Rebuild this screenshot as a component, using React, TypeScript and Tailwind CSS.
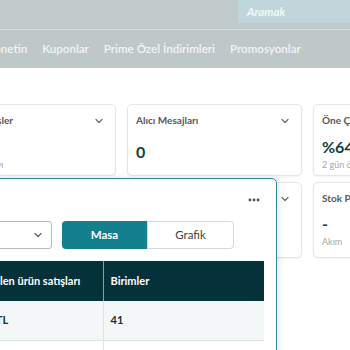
import { ChevronDown, MoreHorizontal } from 'lucide-react';

const font = { fontFamily: 'Lato, "Noto Sans", sans-serif' };

function StatCard({
  title,
  value,
  note,
  chevron,
  className = '',
}: {
  title: string;
  value?: string;
  note?: string;
  chevron?: boolean;
  className?: string;
}) {
  return (
    <div
      className={`relative flex w-[175px] shrink-0 flex-col rounded-[5px] border border-[#e2e6e6] bg-white px-[8px] pt-[8px] shadow-[0_1px_2px_rgba(0,0,0,0.05)] ${className}`}
    >
      <div className="flex items-center justify-between">
        <span className="whitespace-nowrap text-[10px] font-bold text-[#55595a]">{title}</span>
        {chevron && <ChevronDown size={12} strokeWidth={2.5} className="mr-[2px] text-[#6b7070]" />}
      </div>
      {value && <span className="mt-auto whitespace-nowrap text-[16px] font-bold leading-none text-[#123d44]">{value}</span>}
      {note && (
        <span className={`${value ? 'mt-[3px]' : 'mt-auto'} whitespace-nowrap text-[9px] text-[#a3a8a8]`}>{note}</span>
      )}
    </div>
  );
}

export default function App() {
  return (
    <div className="relative h-[350px] w-[350px] overflow-hidden bg-white" style={font}>
      {/* Top bar */}
      <div className="flex h-[29px] justify-end bg-[#c1cacb]">
        <div className="flex h-[23px] w-[112px] items-center bg-[#c1d6da] pl-[9px]">
          <span className="text-[11.5px] font-bold italic text-[#f4f8f8]">Aramak</span>
        </div>
      </div>
      <div className="h-[1px] bg-[#d6dddd]" />
      {/* Nav */}
      <nav className="-ml-[12px] flex h-[38px] items-center gap-[15px] bg-[#bec8c9] text-[11.6px] font-semibold text-[#f1f5f5]">
        <span className="whitespace-nowrap">Yönetin</span>
        <span className="whitespace-nowrap">Kuponlar</span>
        <span className="whitespace-nowrap">Prime Özel İndirimleri</span>
        <span className="whitespace-nowrap">Promosyonlar</span>
      </nav>

      {/* Cards */}
      <div className="-ml-[59px] mt-[36px] flex flex-col gap-[6px]">
        <div className="flex h-[72px] gap-[11px]">
          <StatCard title="Açık Siparişler" note="Bekleyen sayı" chevron className="pb-[4px]" />
          <StatCard title="Alıcı Mesajları" value="0" chevron className="pb-[15px]" />
          <StatCard title="Öne Çıkan Teklif %" value="%64" note="2 gün önce" className="pb-[4px]" />
        </div>
        <div className="flex h-[76px] gap-[11px]">
          <StatCard title="Satışlar" chevron />
          <StatCard title="Hesap Durumu" chevron />
          <StatCard title="Stok Performans Endeksi" value="-" note="Akım" className="pb-[9px]" />
        </div>
      </div>

      {/* Popup */}
      <div className="absolute left-[-75px] top-[178px] h-[200px] w-[352px] rounded-[5px] border border-[#2a8b99] bg-white px-[14px] shadow-[0_2px_8px_rgba(0,0,0,0.15)]">
        <div className="flex h-[42px] items-center justify-end pr-[1px]">
          <MoreHorizontal size={14} strokeWidth={3} className="text-[#4a4f50]" />
        </div>
        <div className="flex h-[28px] gap-[10px]">
          <div className="flex w-[112px] items-center justify-end rounded-[3px] border border-[#b5baba] pr-[7px]">
            <ChevronDown size={12} strokeWidth={2.5} className="text-[#5d6263]" />
          </div>
          <div className="flex">
            <div className="flex w-[85px] items-center justify-center rounded-l-[4px] bg-[#14808e] text-[11.5px] font-bold text-white">
              Masa
            </div>
            <div className="flex w-[87px] items-center justify-center rounded-r-[4px] border border-[#d5d9d9] text-[11.5px] text-[#3c4244]">
              Grafik
            </div>
          </div>
        </div>
        <table className="mt-[12px] w-[324px] border-collapse text-[11px]">
          <thead>
            <tr className="h-[40px] bg-[#04313a] text-left font-bold text-white">
              <th className="w-[163px] whitespace-nowrap border-r border-[#8aa0a4] pl-[10px]">Sipariş edilen ürün satışları</th>
              <th className="whitespace-nowrap pl-[7px]">Birimler</th>
            </tr>
          </thead>
          <tbody>
            <tr className="h-[39px] border-b border-[#dfe3e3] bg-[#f4f7f8] font-bold text-[#20292b]">
              <td className="whitespace-nowrap border-r border-[#dfe3e3] pl-[10px]">1.847,20 TL</td>
              <td className="pl-[7px]">41</td>
            </tr>
            <tr className="h-[39px]">
              <td className="border-r border-[#dfe3e3]" />
              <td />
            </tr>
          </tbody>
        </table>
      </div>
    </div>
  );
}
